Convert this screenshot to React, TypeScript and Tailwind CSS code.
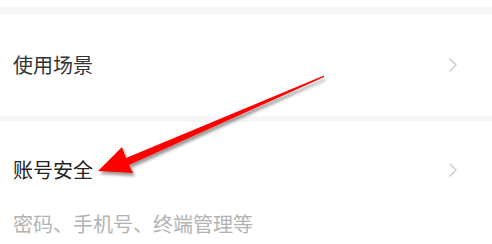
const font = { fontFamily: '"Noto Sans CJK SC", "Noto Sans", sans-serif' };

function Chevron() {
  return (
    <svg width="10" height="16" viewBox="0 0 10 16" fill="none">
      <path d="M2 2L8 8L2 14" stroke="#cfcfcf" strokeWidth="1.6" strokeLinecap="round" strokeLinejoin="round" />
    </svg>
  );
}

export default function App() {
  return (
    <div className="relative w-[492px] h-[244px] overflow-hidden bg-white" style={font}>
      <div className="h-[7px] bg-white" />
      <div className="h-[7px] bg-[#f6f6f6]" />

      <div className="h-[102px] flex items-center justify-between pl-[13px] pr-[34px]">
        <span className="text-[20px] leading-[28px] text-[#333333]">使用场景</span>
        <Chevron />
      </div>

      <div className="h-[6px] bg-[#f6f6f6]" />

      <div className="pt-[34px] pl-[13px] pr-[34px]">
        <div className="flex items-center justify-between">
          <span className="text-[20px] leading-[28px] text-[#222222]">账号安全</span>
          <Chevron />
        </div>
        <div className="mt-[26px] text-[20px] leading-[28px] text-[#b3b3b3]">
          密码、手机号、终端管理等
        </div>
      </div>

      {/* annotation arrow */}
      <svg className="absolute left-0 top-0 pointer-events-none" width="492" height="244" viewBox="0 0 492 244">
        <defs>
          <filter id="sh" x="-10%" y="-10%" width="130%" height="140%">
            <feDropShadow dx="2" dy="3" stdDeviation="1.5" floodColor="#000" floodOpacity="0.4" />
          </filter>
        </defs>
        <polygon
          points="98,171 122,147 126,158 324,75.5 324,77 129,165 133,173"
          fill="#ff0000"
          filter="url(#sh)"
        />
      </svg>
    </div>
  );
}
